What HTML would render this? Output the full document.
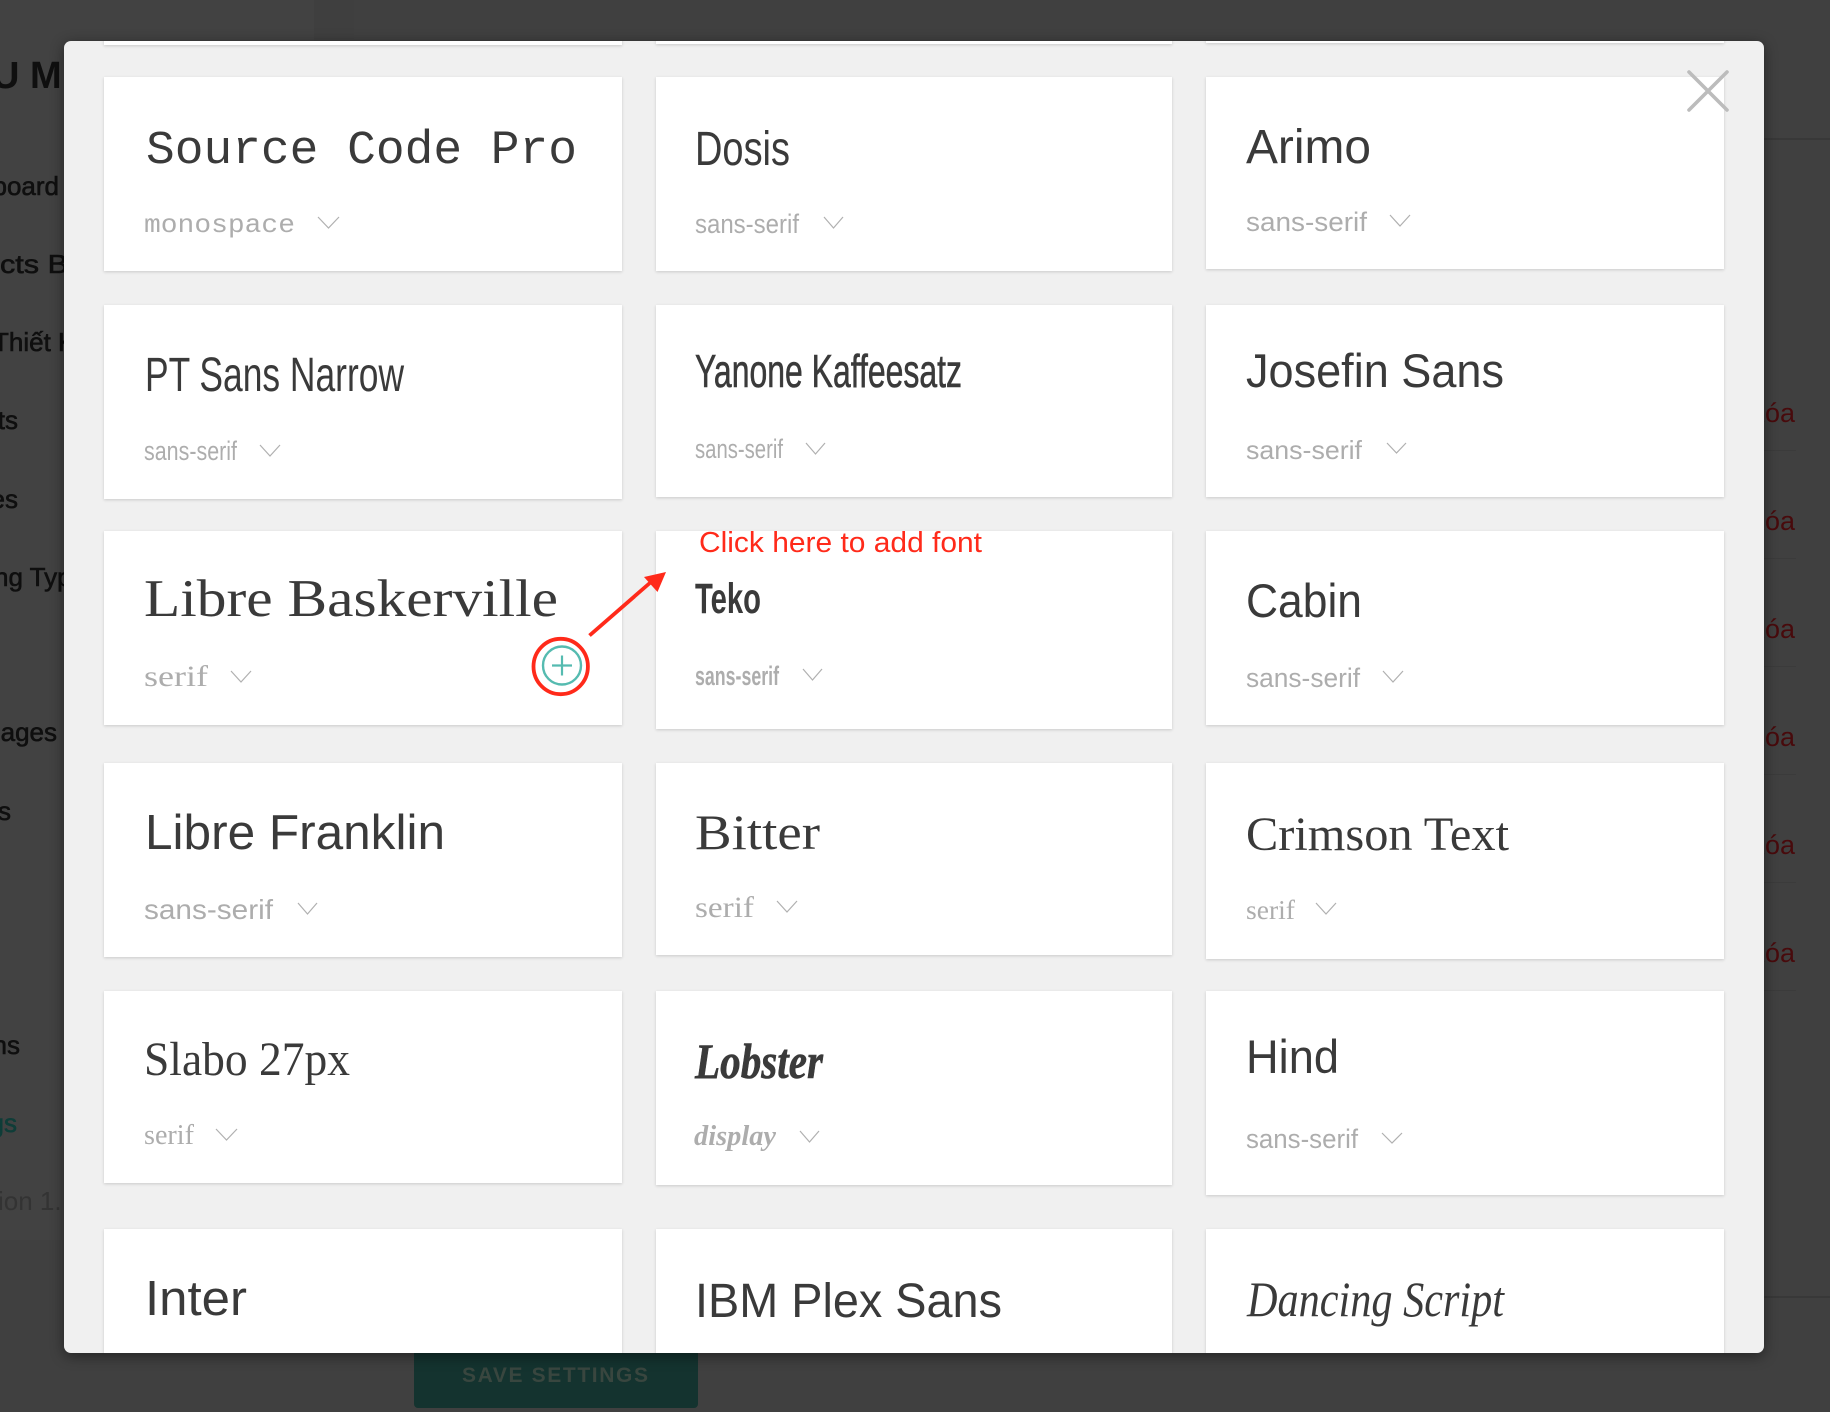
<!DOCTYPE html>
<html><head><meta charset="utf-8"><style>
html,body{margin:0;padding:0;width:1830px;height:1412px;overflow:hidden;background:#424242}
svg{position:absolute;left:0;top:0}
#modal{position:absolute;left:64px;top:41px;width:1700px;height:1312px;background:#f0f0f0;border-radius:7px;overflow:hidden}
#wrap{position:absolute;left:-64px;top:-41px;width:1830px;height:1412px}
#shadow{position:absolute;left:64px;top:41px;width:1700px;height:1312px;border-radius:7px;box-shadow:0 3px 14px rgba(0,0,0,.45)}
.c{position:absolute;background:#fff;box-shadow:0 1px 3px rgba(0,0,0,.16)}
.s{font-family:"Liberation Sans",sans-serif}
.r{font-family:"Liberation Serif",serif}
.m{font-family:"Liberation Mono",monospace}
.t{fill:#3a3a3a}
.u{fill:#adadad}
.k{fill:none;stroke:#b0b0b0;stroke-width:1.2}
.d{fill:#0f0f0f;font-family:"Liberation Sans",sans-serif;font-size:26px;stroke:#0f0f0f;stroke-width:.6}
.x{fill:#480a0c;font-family:"Liberation Sans",sans-serif;font-size:27px}
.b{stroke:#3a3a3a;stroke-width:.6}
.tn{stroke:#fff;stroke-width:.4;paint-order:fill}
</style></head><body>
<svg width="1830" height="1412" viewBox="0 0 1830 1412">
<rect x="0" y="0" width="353" height="1412" fill="#424242"/>
<rect x="353" y="0" width="1477" height="1412" fill="#404040"/>
<rect x="314" y="0" width="40" height="41" fill="#3f3f3f"/>
<rect x="0" y="1240" width="353" height="172" fill="#404040"/>
<rect x="1764" y="138" width="66" height="2" fill="#383838"/>
<rect x="1764" y="1296" width="66" height="2" fill="#383838"/>
<text x="-8" y="88" font-size="38" font-weight="bold" fill="#0f0f0f" class="s">U M</text>
<text x="59" y="195" text-anchor="end" class="d">board</text>
<text x="0" y="273" class="d" textLength="68" lengthAdjust="spacingAndGlyphs">cts B</text>
<text x="-7" y="351" class="d">Thiết K</text>
<text x="18" y="429" text-anchor="end" class="d">ts</text>
<text x="18" y="508" text-anchor="end" class="d">es</text>
<text x="-6" y="586" class="d">ng Typ</text>
<text x="57" y="741" text-anchor="end" class="d">ages</text>
<text x="11" y="820" text-anchor="end" class="d">s</text>
<text x="20" y="1054" text-anchor="end" class="d">ns</text>
<text x="17" y="1132" text-anchor="end" class="d" style="fill:#0f3d38;stroke:#0f3d38">gs</text>
<text x="-2" y="1210" class="d" style="fill:#333;stroke:none">ion 1.</text>
<g class="x">
<text x="1795" y="422" text-anchor="end">Xóa</text>
<text x="1795" y="530" text-anchor="end">Xóa</text>
<text x="1795" y="638" text-anchor="end">Xóa</text>
<text x="1795" y="746" text-anchor="end">Xóa</text>
<text x="1795" y="854" text-anchor="end">Xóa</text>
<text x="1795" y="962" text-anchor="end">Xóa</text>
</g>
<g fill="#3b3b3b">
<rect x="1764" y="450" width="32" height="1"/><rect x="1764" y="558" width="32" height="1"/>
<rect x="1764" y="666" width="32" height="1"/><rect x="1764" y="774" width="32" height="1"/>
<rect x="1764" y="882" width="32" height="1"/><rect x="1764" y="990" width="32" height="1"/>
</g>
<rect x="414" y="1340" width="284" height="68" rx="4" fill="#14332f"/>
<text x="462" y="1382" font-size="21" font-weight="bold" fill="#39463f" textLength="186" lengthAdjust="spacing" class="s">SAVE SETTINGS</text>
</svg>
<div id="shadow"></div>
<div id="modal"><div id="wrap">
<div class="c" style="left:104px;top:20px;width:518px;height:25px"></div>
<div class="c" style="left:656px;top:20px;width:516px;height:24px"></div>
<div class="c" style="left:1206px;top:20px;width:518px;height:23px"></div>

<div class="c" style="left:104px;top:77px;width:518px;height:194px"></div>
<div class="c" style="left:656px;top:77px;width:516px;height:194px"></div>
<div class="c" style="left:1206px;top:77px;width:518px;height:192px"></div>

<div class="c" style="left:104px;top:305px;width:518px;height:194px"></div>
<div class="c" style="left:656px;top:305px;width:516px;height:192px"></div>
<div class="c" style="left:1206px;top:305px;width:518px;height:192px"></div>

<div class="c" style="left:104px;top:531px;width:518px;height:194px"></div>
<div class="c" style="left:656px;top:531px;width:516px;height:198px"></div>
<div class="c" style="left:1206px;top:531px;width:518px;height:194px"></div>

<div class="c" style="left:104px;top:763px;width:518px;height:194px"></div>
<div class="c" style="left:656px;top:763px;width:516px;height:192px"></div>
<div class="c" style="left:1206px;top:763px;width:518px;height:196px"></div>

<div class="c" style="left:104px;top:991px;width:518px;height:192px"></div>
<div class="c" style="left:656px;top:991px;width:516px;height:194px"></div>
<div class="c" style="left:1206px;top:991px;width:518px;height:204px"></div>

<div class="c" style="left:104px;top:1229px;width:518px;height:200px"></div>
<div class="c" style="left:656px;top:1229px;width:516px;height:200px"></div>
<div class="c" style="left:1206px;top:1229px;width:518px;height:200px"></div>

<svg width="1830" height="1412" viewBox="0 0 1830 1412">
<!-- Row 1 -->
<text x="146" y="163" font-size="47" textLength="431" lengthAdjust="spacingAndGlyphs" class="m t">Source Code Pro</text>
<text x="144" y="232" font-size="26" textLength="151" lengthAdjust="spacingAndGlyphs" class="m u">monospace</text>
<polyline points="318,217 328.5,228 339,217" class="k"/>
<text x="695" y="165" font-size="48" textLength="95" lengthAdjust="spacingAndGlyphs" class="s t">Dosis</text>
<text x="695" y="233" font-size="27" textLength="104" lengthAdjust="spacingAndGlyphs" class="s u">sans-serif</text>
<polyline points="824,217 833.5,228 843,217" class="k"/>
<text x="1246" y="163" font-size="48" textLength="125" lengthAdjust="spacingAndGlyphs" class="s t">Arimo</text>
<text x="1246" y="231" font-size="27" textLength="121" lengthAdjust="spacingAndGlyphs" class="s u">sans-serif</text>
<polyline points="1390,215 1400,226 1410,215" class="k"/>
<!-- Row 2 -->
<text x="145" y="391" font-size="48" textLength="259" lengthAdjust="spacingAndGlyphs" class="s t">PT Sans Narrow</text>
<text x="144" y="460" font-size="27" textLength="93" lengthAdjust="spacingAndGlyphs" class="s u">sans-serif</text>
<polyline points="260,445 270,456 280,445" class="k"/>
<text x="695" y="387" font-size="46" textLength="267" lengthAdjust="spacingAndGlyphs" class="s t b">Yanone Kaffeesatz</text>
<text x="695" y="458" font-size="27" textLength="88" lengthAdjust="spacingAndGlyphs" class="s u">sans-serif</text>
<polyline points="806,443 815.5,454 825,443" class="k"/>
<text x="1246" y="387" font-size="47" textLength="258" lengthAdjust="spacingAndGlyphs" class="s t">Josefin Sans</text>
<text x="1246" y="459" font-size="26" textLength="116" lengthAdjust="spacingAndGlyphs" class="s u">sans-serif</text>
<polyline points="1387,443 1396.5,453 1406,443" class="k"/>
<!-- Row 3 -->
<text x="144" y="616" font-size="53" textLength="414" lengthAdjust="spacingAndGlyphs" class="r t">Libre Baskerville</text>
<text x="144" y="686" font-size="30" textLength="64" lengthAdjust="spacingAndGlyphs" class="r u">serif</text>
<polyline points="231,671 241,682 251,671" class="k"/>
<text x="695" y="613" font-size="43" font-weight="bold" textLength="66" lengthAdjust="spacingAndGlyphs" class="s t">Teko</text>
<text x="695" y="685" font-size="27" font-weight="bold" textLength="84" lengthAdjust="spacingAndGlyphs" class="s u">sans-serif</text>
<polyline points="803,669 812.5,680 822,669" class="k"/>
<text x="1246" y="617" font-size="47" textLength="116" lengthAdjust="spacingAndGlyphs" class="s t">Cabin</text>
<text x="1246" y="687" font-size="27" textLength="114" lengthAdjust="spacingAndGlyphs" class="s u">sans-serif</text>
<polyline points="1383,671 1393,682 1403,671" class="k"/>
<!-- Row 4 -->
<text x="145" y="849" font-size="49" textLength="300" lengthAdjust="spacingAndGlyphs" class="s t">Libre Franklin</text>
<text x="144" y="919" font-size="28" textLength="129" lengthAdjust="spacingAndGlyphs" class="s u">sans-serif</text>
<polyline points="298,903 307.5,914 317,903" class="k"/>
<text x="695" y="849" font-size="50" textLength="125" lengthAdjust="spacingAndGlyphs" class="r t">Bitter</text>
<text x="695" y="917" font-size="30" textLength="59" lengthAdjust="spacingAndGlyphs" class="r u">serif</text>
<polyline points="777,901 787,912 797,901" class="k"/>
<text x="1246" y="850" font-size="48" textLength="263" lengthAdjust="spacingAndGlyphs" class="r t">Crimson Text</text>
<text x="1246" y="919" font-size="27" textLength="49" lengthAdjust="spacingAndGlyphs" class="r u">serif</text>
<polyline points="1316,903 1326,914 1336,903" class="k"/>
<!-- Row 5 -->
<text x="144" y="1075" font-size="48" textLength="206" lengthAdjust="spacingAndGlyphs" class="r t">Slabo 27px</text>
<text x="144" y="1144" font-size="28" textLength="50" lengthAdjust="spacingAndGlyphs" class="r u">serif</text>
<polyline points="216,1129 226.5,1140 237,1129" class="k"/>
<text x="695" y="1078" font-size="50" font-weight="bold" font-style="italic" textLength="128" lengthAdjust="spacingAndGlyphs" class="r t b">Lobster</text>
<text x="694" y="1145" font-size="28" font-weight="bold" font-style="italic" textLength="82" lengthAdjust="spacingAndGlyphs" class="r u">display</text>
<polyline points="800,1131 809.5,1142 819,1131" class="k"/>
<text x="1246" y="1073" font-size="47" textLength="93" lengthAdjust="spacingAndGlyphs" class="s t">Hind</text>
<text x="1246" y="1148" font-size="27" textLength="112" lengthAdjust="spacingAndGlyphs" class="s u">sans-serif</text>
<polyline points="1382,1133 1392,1143 1402,1133" class="k"/>
<!-- Row 6 -->
<text x="145" y="1315" font-size="49" textLength="102" lengthAdjust="spacingAndGlyphs" class="s t">Inter</text>
<text x="695" y="1317" font-size="48" textLength="307" lengthAdjust="spacingAndGlyphs" class="s t">IBM Plex Sans</text>
<text x="1247" y="1316" font-size="50" font-style="italic" textLength="257" lengthAdjust="spacingAndGlyphs" class="r t">Dancing Script</text>
<!-- Plus icon -->
<circle cx="562" cy="665.5" r="19" fill="none" stroke="#55bbb0" stroke-width="2.4"/>
<path d="M552 665.5H572M562 655.5V675.5" fill="none" stroke="#55bbb0" stroke-width="2.2"/>
<!-- Annotations -->
<ellipse cx="560.7" cy="666.5" rx="27.2" ry="27.7" fill="none" stroke="#ff2a1a" stroke-width="3.8"/>
<path d="M589.5 635.5L651 582" stroke="#ff2a1a" stroke-width="3.8" fill="none"/>
<polygon points="666,572 644,577 657.5,592" fill="#ff2a1a"/>
<text x="699" y="552" font-size="29" textLength="283" lengthAdjust="spacingAndGlyphs" fill="#ff2a1a" class="s">Click here to add font</text>
<!-- Close -->
<path d="M1689 72L1727 110M1727 72L1689 110" stroke="#bcbcbc" stroke-width="3.6" stroke-linecap="round" fill="none"/>
</svg>
</div></div>
</body></html>
